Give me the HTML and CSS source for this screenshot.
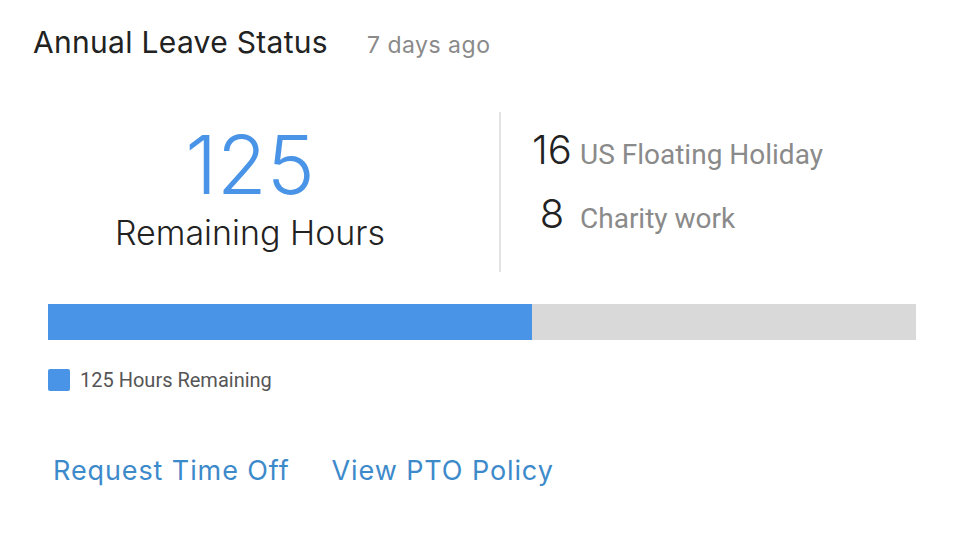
FILE: index.html
```html
<!DOCTYPE html>
<html>
<head>
  <link rel="stylesheet" href="styles.css">
</head>
<body>
  <div class="card">
    <div class="header">
      <div class="title">Annual Leave Status</div>
      <div class="updated">7 days ago</div>
    </div>

    <div class="summary">
      <div class="total">
        <div class="total-num">125</div>
        <div class="total-label">Remaining Hours</div>
      </div>
      <div class="other">
        <div class="other-row">
          <div class="other-num">16</div>
          <div class="other-label">US Floating Holiday</div>
        </div>
        <div class="other-row">
          <div class="other-num">8</div>
          <div class="other-label">Charity work</div>
        </div>
      </div>
    </div>

    <div class="bar">
      <div class="bar-fill" style="width: 55.8%"></div>
    </div>

    <div class="legend">
      <div class="legend-swatch"></div>
      <div class="legend-text">125 Hours Remaining</div>
    </div>

    <div class="links">
      <a class="link" href="#">Request Time Off</a>
      <a class="link" href="#">View PTO Policy</a>
    </div>
  </div>
</body>
</html>
```

FILE: styles.css
```css
body {
  margin: 0;
  padding: 0;
  background-color: #fff;
  font-family: "Inter", "Roboto", sans-serif;
}

.card {
  padding: 24px 48px 0 48px;
  width: 868px;
}

.header {
  display: flex;
  align-items: baseline;
  margin-left: -15px;
}

.title {
  font-size: 30px;
  color: #222;
  letter-spacing: 0.3px;
}

.updated {
  font-size: 23px;
  color: #8a8a8a;
  margin-left: 39px;
  letter-spacing: 0.5px;
}

.summary {
  display: flex;
  margin-top: 52px;
  height: 160px;
}

.total {
  width: 404px;
  padding-right: 47px;
  border-right: 2px solid #e2e2e2;
  text-align: center;
}

.total-num {
  font-size: 81px;
  font-weight: 300;
  color: #4a94e8;
  line-height: 86px;
  margin-top: 10px;
}

.total-label {
  font-size: 34px;
  color: #222;
  font-weight: 300;
  margin-top: 4px;
}

.other {
  padding-left: 31px;
  padding-top: 13px;
}

.other-row {
  display: flex;
  align-items: baseline;
  height: 64px;
}

.other-num {
  width: 40px;
  text-align: center;
  font-size: 40px;
  font-weight: 300;
  color: #222;
}

.other-label {
  margin-left: 8px;
  font-family: "Roboto", sans-serif;
  font-size: 28px;
  color: #8a8a8a;
}

.bar {
  margin-top: 32px;
  height: 36px;
  background: #d9d9d9;
}

.bar-fill {
  height: 100%;
  background: #4a94e8;
}

.legend {
  display: flex;
  align-items: center;
  margin-top: 28px;
}

.legend-swatch {
  width: 22px;
  height: 22px;
  border-radius: 2px;
  background: #4a94e8;
}

.legend-text {
  margin-left: 10px;
  font-family: "Roboto", sans-serif;
  font-size: 20px;
  color: #555;
}

.links {
  display: flex;
  gap: 42px;
  margin-top: 62px;
  padding-left: 5px;
}

.link {
  font-size: 27px;
  color: #3d8acb;
  text-decoration: none;
  letter-spacing: 0.9px;
}
```
